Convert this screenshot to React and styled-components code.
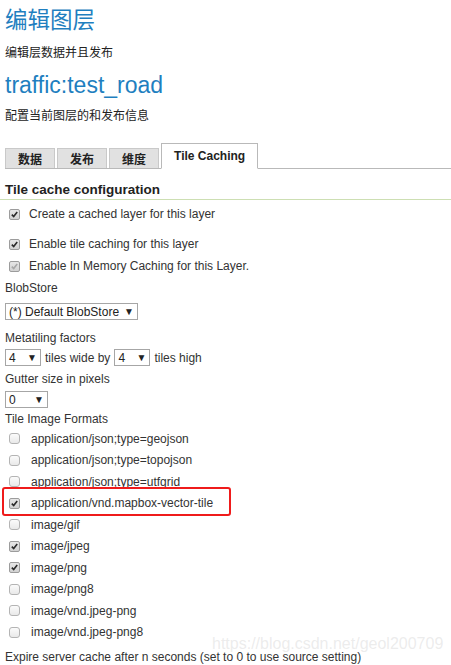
import React from "react";
import styled, { createGlobalStyle } from "styled-components";

const GlobalStyle = createGlobalStyle`
  html, body {
    margin: 0;
    padding: 0;
    background: #fff;
  }
  body {
    font-family: "Liberation Sans", Arial, "Noto Sans CJK SC", sans-serif;
    font-size: 12px;
    color: #333;
  }
`;

const Page = styled.div`
  position: relative;
  width: 451px;
  height: 665px;
  overflow: hidden;
  padding-left: 5px;
  box-sizing: border-box;
`;

const Title = styled.h1`
  margin: ${(p) => p.$top}px 0 0;
  height: 32px;
  line-height: 32px;
  font-size: ${(p) => p.$size || 23}px;
  font-weight: normal;
  color: #1f7fc0;
  font-family: "Liberation Sans", Arial, "Noto Sans CJK SC", sans-serif;
`;

const Subtitle = styled.p`
  margin: ${(p) => p.$top}px 0 0;
  height: 16px;
  line-height: 16px;
  font-size: 12px;
  color: #222;
`;

const TabBar = styled.div`
  display: flex;
  align-items: flex-end;
  gap: 2px;
  height: 25px;
  margin: 19px 0 0 0;
  border-bottom: 1px solid #b9b9b9;
`;

const Tab = styled.div`
  box-sizing: border-box;
  display: flex;
  align-items: center;
  justify-content: center;
  padding: 0 12px;
  font-weight: bold;
  font-size: 12px;
  color: #222;
  height: ${(p) => (p.$active ? "26px" : "20px")};
  margin-bottom: ${(p) => (p.$active ? "-1px" : "0")};
  background: ${(p) => (p.$active ? "#fff" : "#e1e1e1")};
  border: 1px solid ${(p) => (p.$active ? "#b9b9b9" : "#c9c9c9")};
  border-bottom: ${(p) => (p.$active ? "1px solid #fff" : "none")};
`;

const Heading = styled.h2`
  margin: 11px 0 0 -5px;
  padding-left: 5px;
  height: 19px;
  line-height: 19px;
  font-size: 13.5px;
  font-weight: bold;
  color: #222;
  border-bottom: 1px solid #cddfb3;
`;

const Row = styled.div`
  position: relative;
  display: flex;
  align-items: center;
  height: ${(p) => p.$h || 22}px;
  margin-top: ${(p) => p.$top || 0}px;
  gap: ${(p) => p.$gap || 0}px;
`;

const Label = styled.div`
  height: ${(p) => p.$h || 22}px;
  line-height: ${(p) => p.$h || 22}px;
  margin-top: ${(p) => p.$top || 0}px;
`;

const Box = styled.span`
  box-sizing: border-box;
  width: 11px;
  height: 11px;
  margin-left: 4px;
  margin-right: ${(p) => p.$gap}px;
  border: 1px solid ${(p) => (p.$checked ? "#9c9c9c" : "#b4b4b4")};
  border-radius: ${(p) => (p.$checked ? "2px" : "3px")};
  background: ${(p) =>
    p.$checked
      ? "linear-gradient(#e6e6e6, #d2d2d2)"
      : "linear-gradient(#fbfbfb, #e9e9e9)"};
  display: flex;
  align-items: center;
  justify-content: center;
  flex: none;
`;

const Select = styled.div`
  box-sizing: border-box;
  display: flex;
  align-items: center;
  justify-content: space-between;
  width: ${(p) => p.$w}px;
  height: 17px;
  margin-top: ${(p) => p.$top || 0}px;
  padding: 0 3px 0 3px;
  border: 1px solid #a6a6a6;
  background: #fff;
  font-size: 12px;
  color: #222;
  flex: none;
`;

const Arrow = styled.span`
  font-size: 10px;
  color: #222;
`;

const Highlight = styled.div`
  position: absolute;
  left: -3px;
  top: -6px;
  width: 229px;
  height: 29px;
  box-sizing: border-box;
  border: 2.5px solid #ef1b1b;
  border-radius: 3px;
  pointer-events: none;
`;

const Watermark = styled.div`
  position: absolute;
  left: 212px;
  top: 635px;
  font-size: 16px;
  color: rgba(200, 200, 200, 0.35);
  white-space: nowrap;
`;

const Check = ({ checked, disabled, gap }) => (
  <Box $checked={checked} $gap={gap}>
    {checked && (
      <svg width="7" height="7" viewBox="0 0 7 7">
        <path
          d="M0.8 3.6 L2.7 5.6 L6.2 1"
          fill="none"
          stroke={disabled ? "#a8a8a8" : "#2a2a2a"}
          strokeWidth="1.6"
        />
      </svg>
    )}
  </Box>
);

const formats = [
  ["application/json;type=geojson", false],
  ["application/json;type=topojson", false],
  ["application/json;type=utfgrid", false],
  ["application/vnd.mapbox-vector-tile", true, true],
  ["image/gif", false],
  ["image/jpeg", true],
  ["image/png", true],
  ["image/png8", false],
  ["image/vnd.jpeg-png", false],
  ["image/vnd.jpeg-png8", false],
];

const App = () => {
  return (
    <Page>
      <GlobalStyle />
      <Title $top={5} $size={22.5}>编辑图层</Title>
      <Subtitle $top={8}>编辑层数据并且发布</Subtitle>
      <Title $top={8}>traffic:test_road</Title>
      <Subtitle $top={7}>配置当前图层的和发布信息</Subtitle>

      <TabBar>
        <Tab>数据</Tab>
        <Tab>发布</Tab>
        <Tab>维度</Tab>
        <Tab $active>Tile Caching</Tab>
      </TabBar>

      <Heading>Tile cache configuration</Heading>

      <Row $top={3}>
        <Check checked gap={9} />
        Create a cached layer for this layer
      </Row>
      <Row $top={8}>
        <Check checked gap={9} />
        Enable tile caching for this layer
      </Row>
      <Row>
        <Check checked disabled gap={9} />
        Enable In Memory Caching for this Layer.
      </Row>

      <Label>BlobStore</Label>
      <Select $w={133} $top={4}>
        (*) Default BlobStore <Arrow>▼</Arrow>
      </Select>

      <Label $top={7}>Metatiling factors</Label>
      <Row $h={17} $gap={4}>
        <Select $w={36}>
          4 <Arrow>▼</Arrow>
        </Select>
        tiles wide by
        <Select $w={36}>
          4 <Arrow>▼</Arrow>
        </Select>
        tiles high
      </Row>

      <Label $top={2}>Gutter size in pixels</Label>
      <Select $w={43} $top={1}>
        0 <Arrow>▼</Arrow>
      </Select>

      <Label $top={2} $h={18}>
        Tile Image Formats
      </Label>
      {formats.map(([name, checked, marked]) => (
        <Row key={name} $h={21.5}>
          <Check checked={checked} gap={11} />
          {name}
          {marked && <Highlight />}
        </Row>
      ))}

      <Label $top={3}>
        Expire server cache after n seconds (set to 0 to use source setting)
      </Label>

      <Watermark>https://blog.csdn.net/geol200709</Watermark>
    </Page>
  );
};

export default App;
